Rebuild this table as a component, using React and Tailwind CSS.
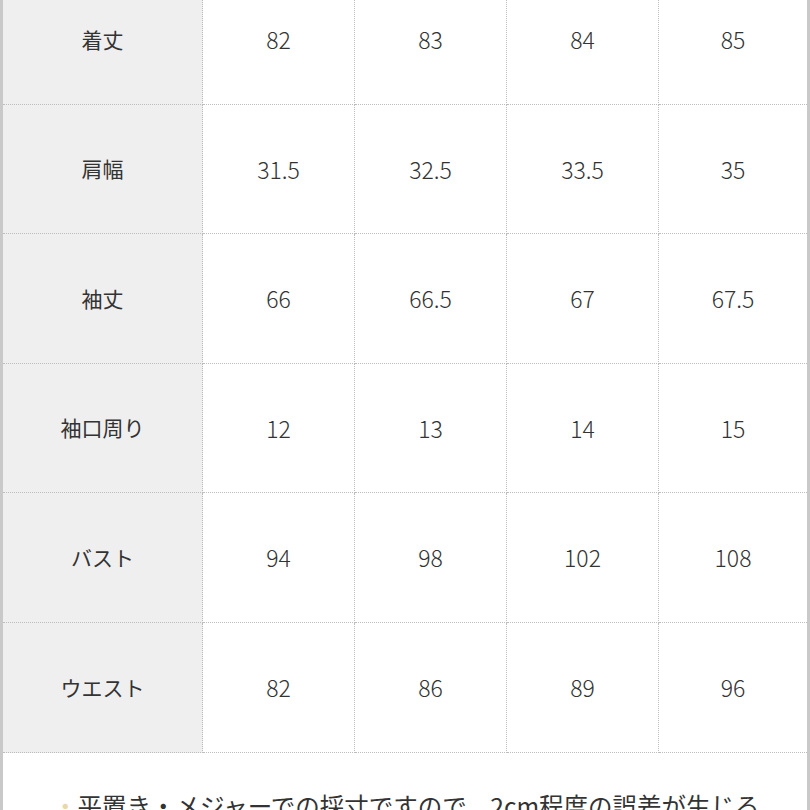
import React from "react";

const rows = [
  ["着丈", "82", "83", "84", "85"],
  ["肩幅", "31.5", "32.5", "33.5", "35"],
  ["袖丈", "66", "66.5", "67", "67.5"],
  ["袖口周り", "12", "13", "14", "15"],
  ["バスト", "94", "98", "102", "108"],
  ["ウエスト", "82", "86", "89", "96"],
];

const font = { fontFamily: '"Noto Sans CJK JP", "Noto Sans", sans-serif' };

const App = () => {
  return (
    <div
      className="w-[810px] h-[810px] overflow-hidden bg-white border-x-[3px] border-[#c9c9c9] text-[#333]"
      style={font}
    >
      <div className="-mt-[25px] grid grid-cols-[200px_152px_152px_152px_148px]">
        {rows.map((row, i) =>
          row.map((cell, j) => (
            <div
              key={i + "-" + j}
              className={
                "h-[129.6px] flex items-center justify-center border-b border-dotted border-[#bdbdbd] " +
                (j < 4 ? "border-r " : "") +
                (j === 0 ? "bg-[#efefef] text-[21px]" : "text-[23px] font-light")
              }
            >
              {cell}
            </div>
          ))
        )}
      </div>

      <div className="pt-[41px] pl-[50px] text-[24.5px] leading-none whitespace-nowrap">
        <span className="text-[#e8d9a8]">・</span>
        平置き・メジャーでの採寸ですので、2cm程度の誤差が生じる
      </div>
    </div>
  );
};

export default App;
